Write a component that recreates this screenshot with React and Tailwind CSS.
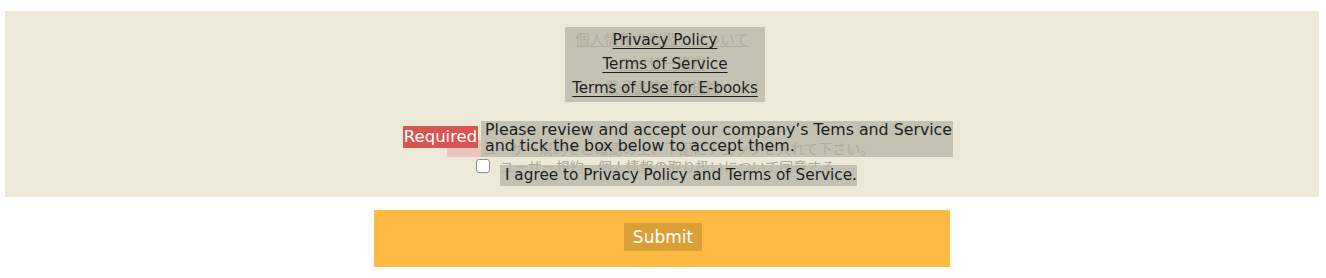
const en = { fontFamily: '"DejaVu Sans", "Liberation Sans", sans-serif' }
const ja = { fontFamily: '"Noto Sans CJK JP", sans-serif' }

function Links() {
  const items = [
    { t: 'Privacy Policy', size: 'text-[15.4px]' },
    { t: 'Terms of Service', size: 'text-[15.2px]' },
    { t: 'Terms of Use for E-books', size: 'text-[15px]' },
  ]
  return (
    <div className="relative">
      <ul className="text-[14.5px] leading-[24px] text-[#86847a] text-center" style={ja}>
        <li className="underline">個人情報の取扱いについて</li>
        <li className="underline">ユーザー規約</li>
        <li className="underline">電子書籍利用規約</li>
      </ul>
      <div
        className="absolute top-0 left-1/2 ml-[-97px] w-[200px] h-[75px] bg-[#b9b6a6]/80 flex flex-col items-center pt-[1px] leading-[24px] text-[#1e1e1e]"
        style={en}
      >
        {items.map((i) => (
          <a key={i.t} href="#" className={`${i.size} underline underline-offset-[3px]`}>{i.t}</a>
        ))}
      </div>
    </div>
  )
}

function Consent() {
  return (
    <div className="relative w-[430px] mt-[41px]">
      <div className="flex items-center h-[17px]">
        <span className="w-[34px] h-[17px] bg-[#e8c6be]" />
        <p className="ml-[2px] text-[14px] text-[#86847a] leading-[17px]" style={ja}>
          ユーザー規約をご確認の上、下記にチェックを入れて下さい。
        </p>
      </div>
      <label className="flex items-start mt-[2px] h-[16px]">
        <input
          type="checkbox"
          className="ml-[29px] w-[14px] h-[14px] appearance-none rounded-[3px] border border-[#8f8f8f] bg-white"
        />
        <span className="ml-[10px] text-[14px] text-[#a9a69b] leading-[15px]" style={ja}>
          ユーザー規約、個人情報の取り扱いについて同意する
        </span>
      </label>

      <span
        className="absolute left-[-44px] top-[-14px] w-[75px] h-[22px] bg-[#d95552] text-white text-[16.5px] leading-[22px] text-center"
        style={en}
      >
        Required
      </span>
      <div
        className="absolute left-[34px] top-[-19px] w-[472px] h-[36px] bg-[#b9b6a6]/80 pl-[4px] pt-[1px] text-[15.8px] leading-[16px] text-[#1e1e1e]"
        style={en}
      >
        Please review and accept our company’s Tems and Service<br />
        and tick the box below to accept them.
      </div>
      <div
        className="absolute left-[53px] top-[25px] w-[357px] h-[21px] bg-[#b9b6a6]/80 pl-[5px] text-[15.3px] leading-[21px] text-[#1e1e1e]"
        style={en}
      >
        I agree to Privacy Policy and Terms of Service.
      </div>
    </div>
  )
}

export default function App() {
  return (
    <div className="w-[1326px] h-[278px] bg-white pt-[11px]">
      <section className="mx-[5px] w-[1314px] h-[186px] bg-[#ece9d9] flex flex-col items-center pt-[16px]">
        <Links />
        <Consent />
      </section>
      <div className="mt-[13px] ml-[374px] w-[576px] h-[57px] bg-[#fdb942] flex items-start justify-center pt-[13px]">
        <button
          type="button"
          className="ml-[2px] w-[78px] h-[28px] bg-[#db9f37] text-white text-[17px] leading-[28px] text-center"
          style={en}
        >
          Submit
        </button>
      </div>
    </div>
  )
}
